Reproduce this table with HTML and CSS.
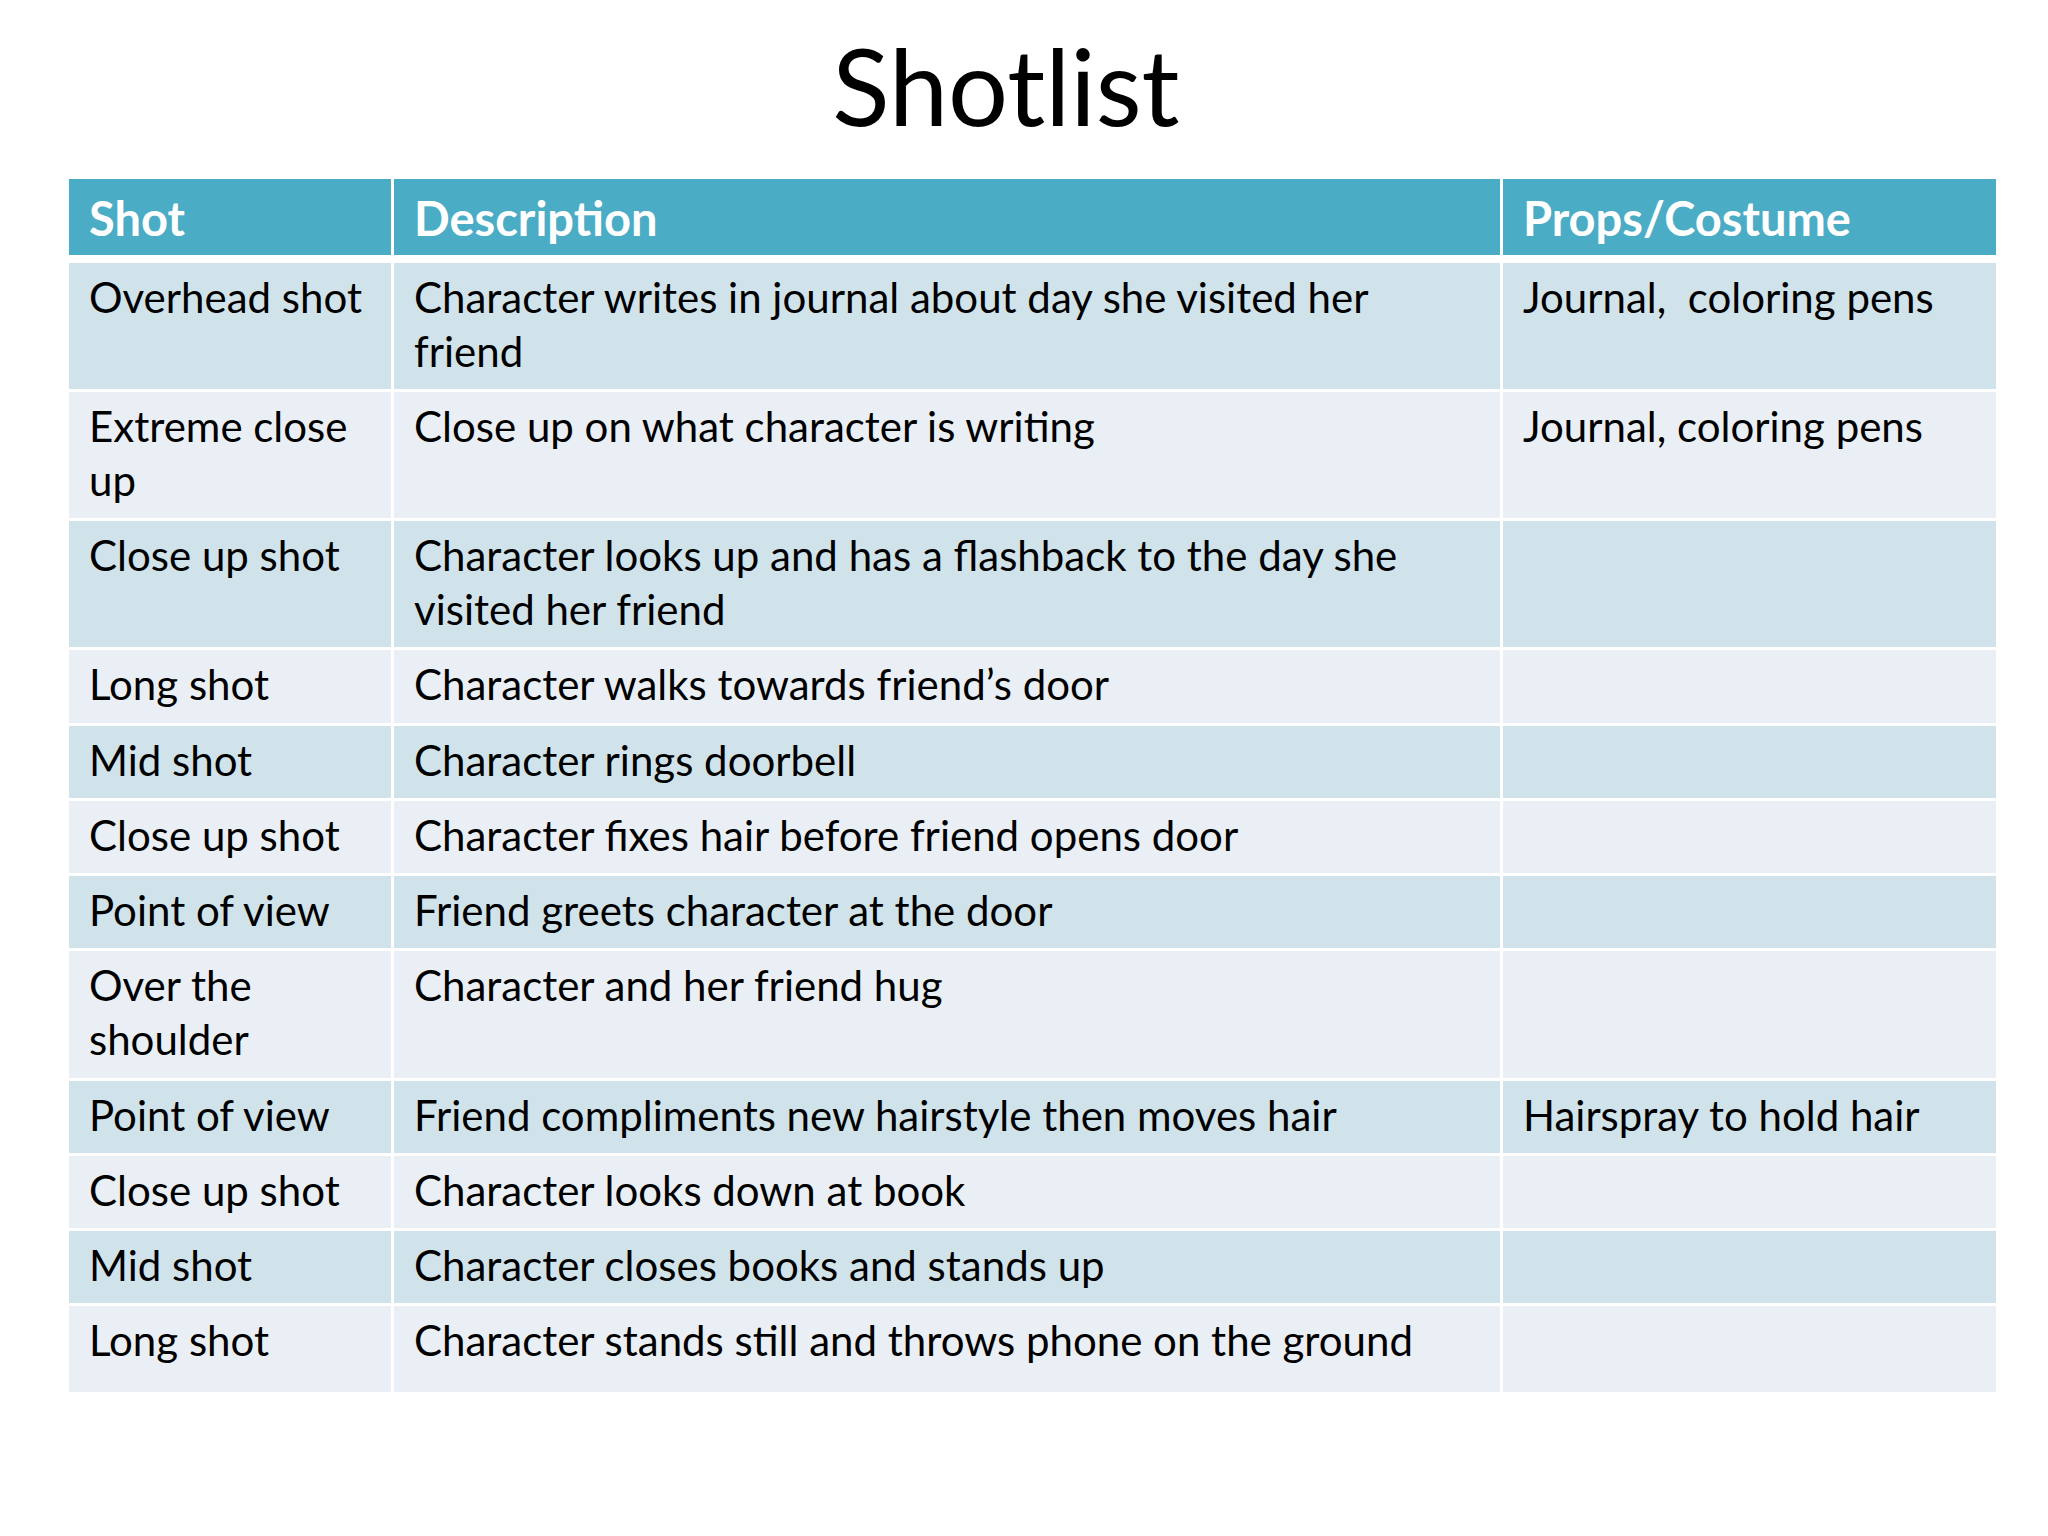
FILE: index.html
```html
<!DOCTYPE html>
<html lang="en">
<head>
<meta charset="utf-8">
<title>Shotlist</title>
<link rel="stylesheet" href="styles.css">
</head>
<body>
<div class="slide">
  <h1 class="title">Shotlist</h1>
  <div class="shot-table">
    <div class="cell head">Shot</div>
    <div class="cell head">Description</div>
    <div class="cell head">Props/Costume</div>

    <div class="cell band1">Overhead shot</div>
    <div class="cell band1">Character writes in journal about day she visited her<br>friend</div>
    <div class="cell band1">Journal,&nbsp; coloring pens</div>

    <div class="cell band2">Extreme close<br>up</div>
    <div class="cell band2">Close up on what character is writing</div>
    <div class="cell band2">Journal, coloring pens</div>

    <div class="cell band1">Close up shot</div>
    <div class="cell band1">Character looks up and has a flashback to the day she<br>visited her friend</div>
    <div class="cell band1"></div>

    <div class="cell band2">Long shot</div>
    <div class="cell band2">Character walks towards friend’s door</div>
    <div class="cell band2"></div>

    <div class="cell band1">Mid shot</div>
    <div class="cell band1">Character rings doorbell</div>
    <div class="cell band1"></div>

    <div class="cell band2">Close up shot</div>
    <div class="cell band2">Character fixes hair before friend opens door</div>
    <div class="cell band2"></div>

    <div class="cell band1">Point of view</div>
    <div class="cell band1">Friend greets character at the door</div>
    <div class="cell band1"></div>

    <div class="cell band2">Over the<br>shoulder</div>
    <div class="cell band2">Character and her friend hug</div>
    <div class="cell band2"></div>

    <div class="cell band1">Point of view</div>
    <div class="cell band1">Friend compliments new hairstyle then moves hair</div>
    <div class="cell band1">Hairspray to hold hair</div>

    <div class="cell band2">Close up shot</div>
    <div class="cell band2">Character looks down at book</div>
    <div class="cell band2"></div>

    <div class="cell band1">Mid shot</div>
    <div class="cell band1">Character closes books and stands up</div>
    <div class="cell band1"></div>

    <div class="cell band2 last">Long shot</div>
    <div class="cell band2 last">Character stands still and throws phone on the ground</div>
    <div class="cell band2 last"></div>
  </div>
</div>
</body>
</html>
```

FILE: styles.css
```css
html, body {
  margin: 0;
  padding: 0;
  background: #ffffff;
}

body {
  font-family: Lato, "Open Sans", "Liberation Sans", sans-serif;
  color: #000000;
}

.slide {
  width: 2048px;
  height: 1536px;
  box-sizing: border-box;
  padding: 22px 0 0 69px;
}

.title {
  margin: 0 0 30px 0;
  height: 127px;
  font-size: 106px;
  line-height: 127px;
  font-weight: 400;
  text-align: center;
  padding-right: 105px;
}

.shot-table {
  display: grid;
  grid-template-columns: 322px 1106px 493px;
  column-gap: 3px;
  row-gap: 3px;
  width: 1927px;
}

.cell {
  box-sizing: border-box;
  padding: 8px 20px 10.5px 20px;
  font-size: 42px;
  line-height: 53.8px;
  white-space: nowrap;
}

.head {
  background: #4bacc6;
  color: #ffffff;
  font-weight: 700;
  font-size: 47px;
  line-height: 60px;
  padding-top: 9px;
  padding-bottom: 7px;
  margin-bottom: 5px;
}

.band1 {
  background: #d0e3ea;
}

.band2 {
  background: #e9eff4;
}

.last {
  padding-bottom: 23.4px;
}
```
